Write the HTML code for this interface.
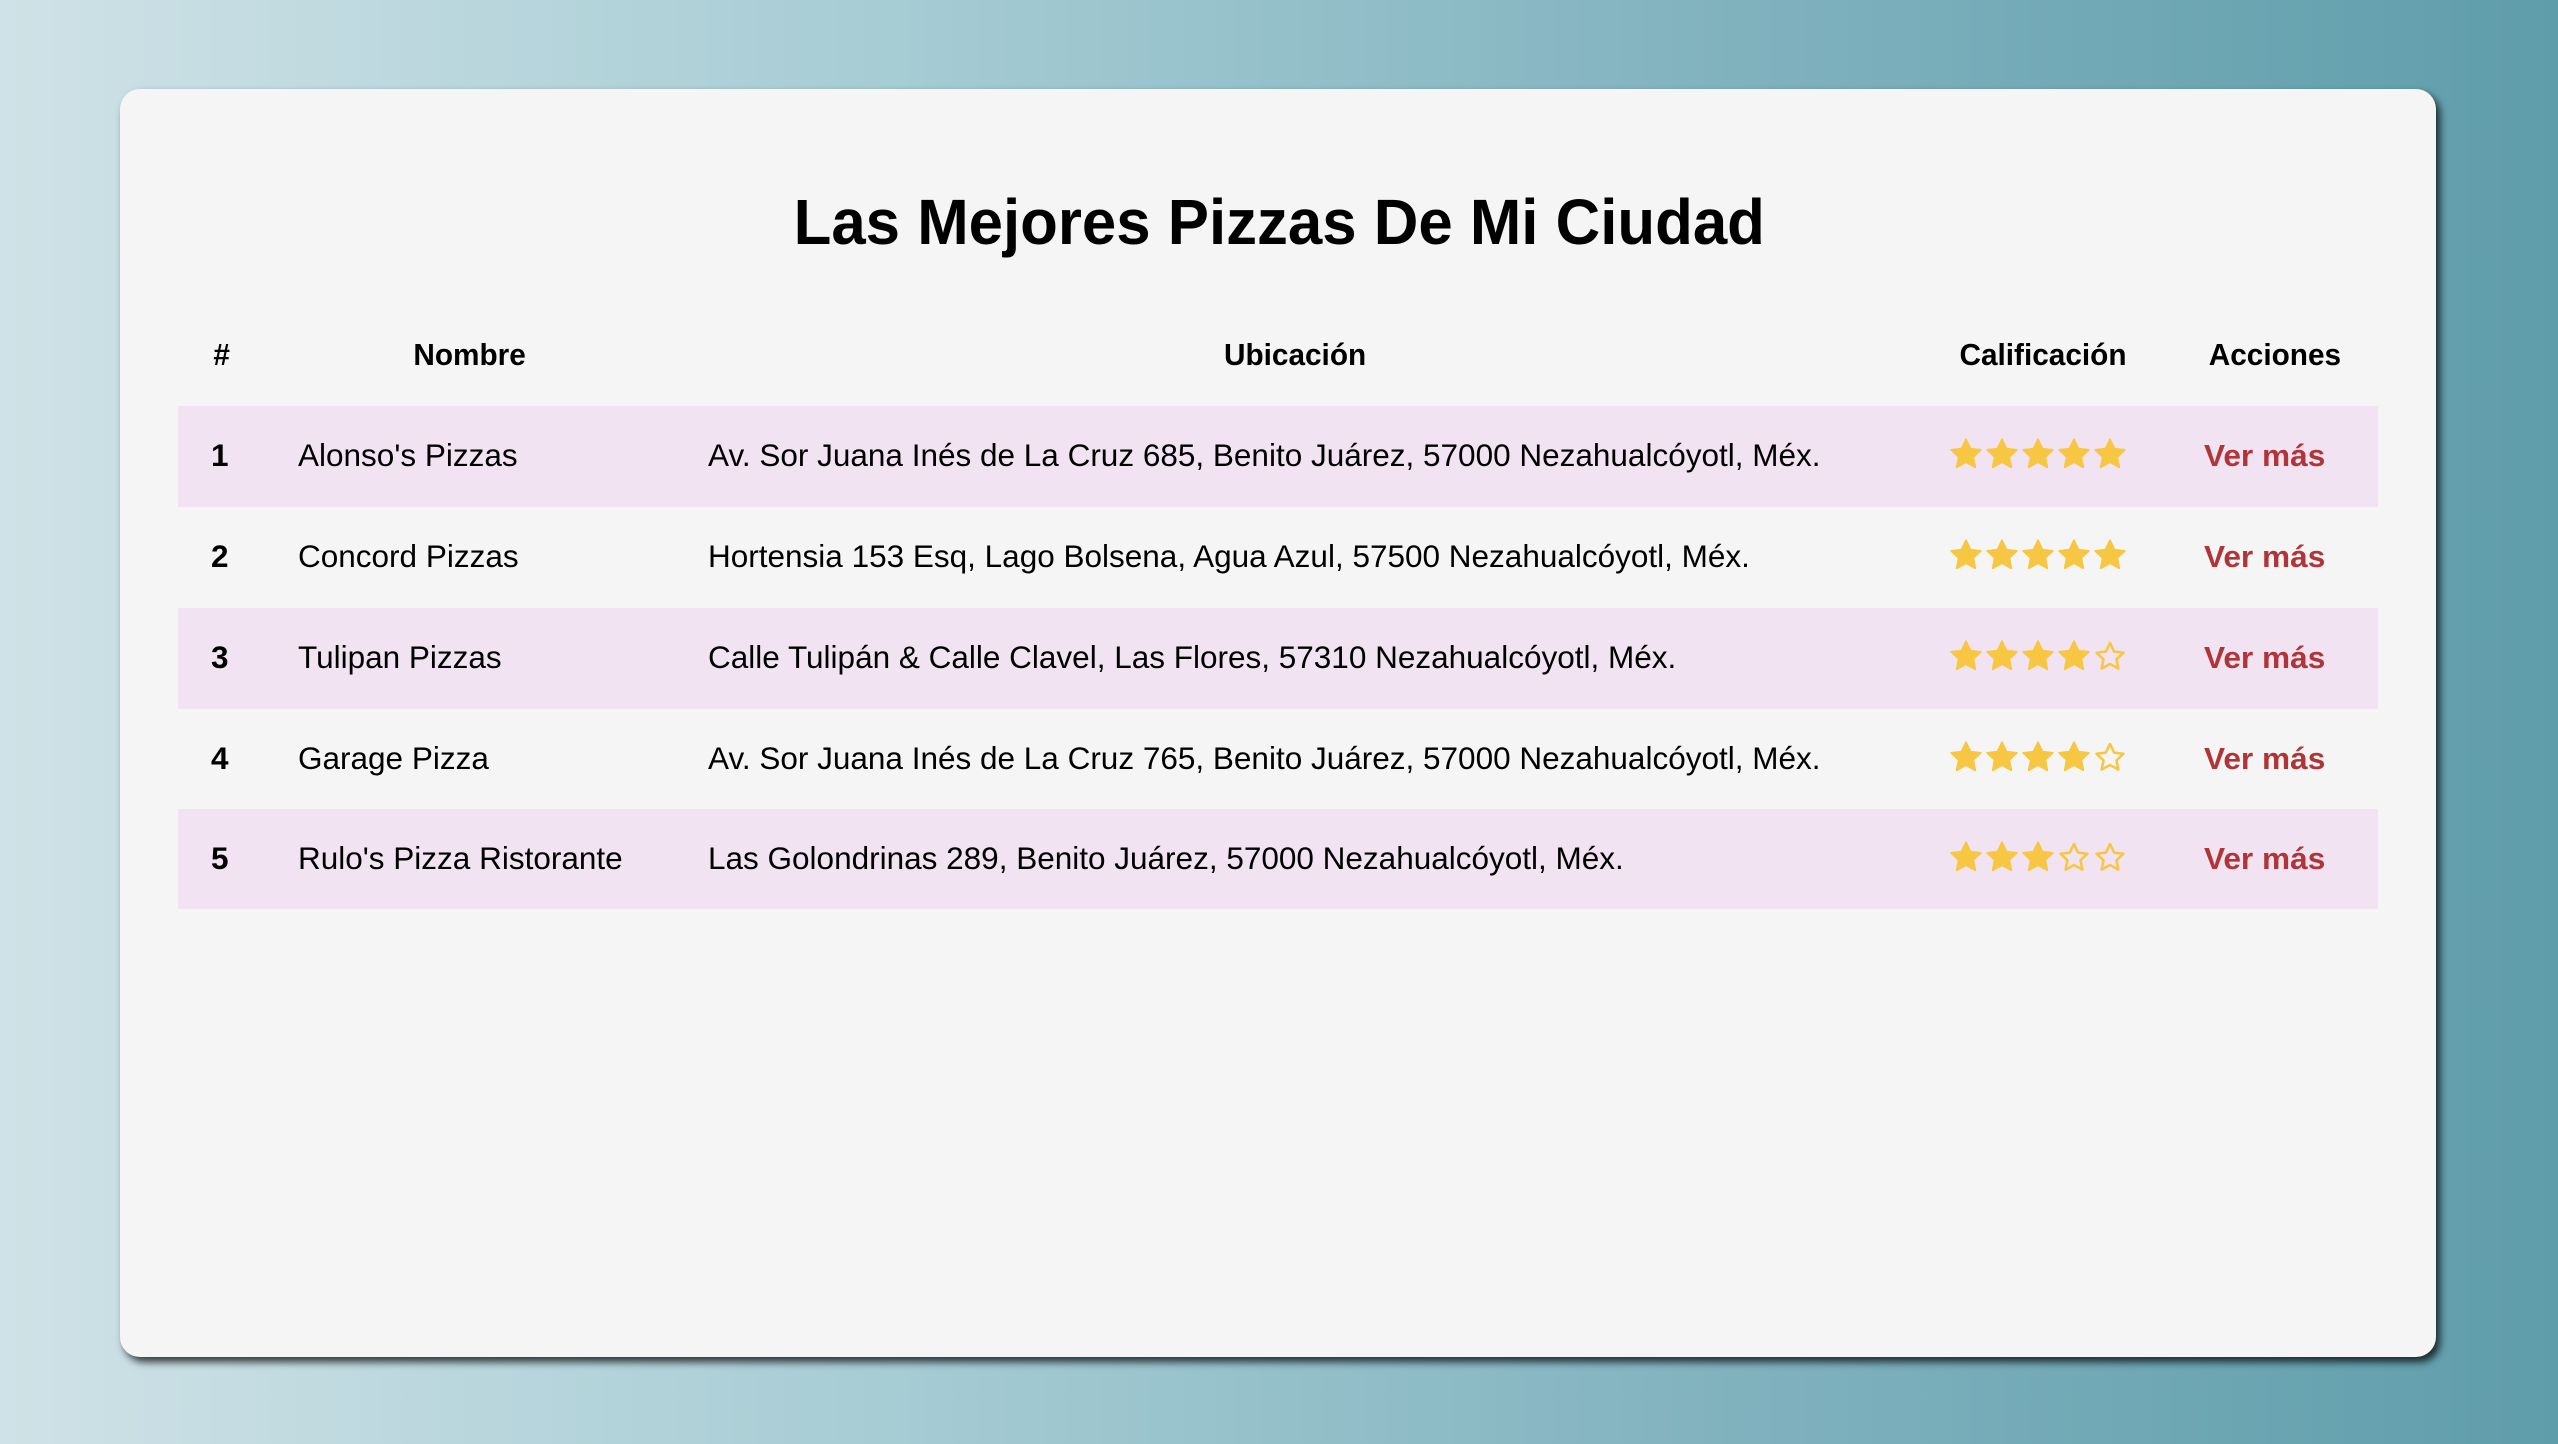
<!DOCTYPE html>
<html><head><meta charset="utf-8"><style>
html,body{margin:0;padding:0;width:2558px;height:1444px;overflow:hidden}
body{background:linear-gradient(90deg,#cfe2e7 0%,#a6ccd4 35%,#83b4c0 65%,#5f9dab 100%);font-family:"Liberation Sans",sans-serif;position:relative}
.card{position:absolute;left:120px;top:89px;width:2316px;height:1268px;background:#f5f5f5;border-radius:20px;box-shadow:4px 5px 8px rgba(0,0,0,.75)}
.t{position:absolute;white-space:nowrap;line-height:1;transform-origin:left center}
.title{position:absolute;left:0;width:2558px;top:189px;text-align:center;font-weight:bold;font-size:64px;line-height:66px;color:#000}
.title span{display:inline-block;transform:scaleX(.965)}
.h{font-weight:bold;font-size:31px;color:#000;top:339px}
.h span{display:inline-block;transform:scaleX(.96)}
.row{position:absolute;left:178px;width:2200px;height:101px}
.pink{background:#f1e3f1}
.c{font-size:31.5px;color:#000}
.n{font-weight:bold}
.v{color:#b03538;font-weight:bold;font-size:31px;transform:scaleX(1.02)}
.stars{position:absolute;left:1949px;display:flex;gap:2px}
</style></head><body>
<div class="card"></div>
<div class="title"><span>Las Mejores Pizzas De Mi Ciudad</span></div>
<div class="t h" style="left:172px;width:100px;text-align:center"><span>#</span></div>
<div class="t h" style="left:370px;width:200px;text-align:center"><span>Nombre</span></div>
<div class="t h" style="left:1195px;width:200px;text-align:center"><span>Ubicación</span></div>
<div class="t h" style="left:1943px;width:200px;text-align:center"><span>Calificación</span></div>
<div class="t h" style="left:2175px;width:200px;text-align:center"><span>Acciones</span></div>

<svg width="0" height="0" style="position:absolute"><defs>
<symbol id="sf" viewBox="0 0 24 24"><path d="M12 1.5l3.2 6.7 7.3.9-5.3 5 1.4 7.3L12 17.8l-6.6 3.6 1.4-7.3-5.3-5 7.3-.9z" fill="#f7c744" stroke="#f7c744" stroke-width="1.2" stroke-linejoin="round"/></symbol>
<symbol id="se" viewBox="0 0 24 24"><path d="M12 2.8l2.9 6.1 6.6.8-4.9 4.6 1.3 6.6L12 17.6l-5.9 3.3 1.3-6.6-4.9-4.6 6.6-.8z" fill="none" stroke="#f7c744" stroke-width="1.8" stroke-linejoin="round"/></symbol>
</defs></svg>

<div class="row pink" style="top:406px"></div>
<div class="row" style="top:507px"></div>
<div class="row pink" style="top:608px"></div>
<div class="row" style="top:709px"></div>
<div class="row pink" style="top:809px;height:100px"></div>

<div class="t c n" style="left:211px;top:440px">1</div>
<div class="t c" style="left:298px;top:440px">Alonso's Pizzas</div>
<div class="t c" style="left:708px;top:440px">Av. Sor Juana Inés de La Cruz 685, Benito Juárez, 57000 Nezahualcóyotl, Méx.</div>
<div class="stars" style="top:437px"><svg width="34" height="34"><use href="#sf"/></svg><svg width="34" height="34"><use href="#sf"/></svg><svg width="34" height="34"><use href="#sf"/></svg><svg width="34" height="34"><use href="#sf"/></svg><svg width="34" height="34"><use href="#sf"/></svg></div>
<div class="t v" style="left:2204px;top:440px">Ver más</div>

<div class="t c n" style="left:211px;top:541px">2</div>
<div class="t c" style="left:298px;top:541px">Concord Pizzas</div>
<div class="t c" style="left:708px;top:541px">Hortensia 153 Esq, Lago Bolsena, Agua Azul, 57500 Nezahualcóyotl, Méx.</div>
<div class="stars" style="top:538px"><svg width="34" height="34"><use href="#sf"/></svg><svg width="34" height="34"><use href="#sf"/></svg><svg width="34" height="34"><use href="#sf"/></svg><svg width="34" height="34"><use href="#sf"/></svg><svg width="34" height="34"><use href="#sf"/></svg></div>
<div class="t v" style="left:2204px;top:541px">Ver más</div>

<div class="t c n" style="left:211px;top:642px">3</div>
<div class="t c" style="left:298px;top:642px">Tulipan Pizzas</div>
<div class="t c" style="left:708px;top:642px">Calle Tulipán &amp; Calle Clavel, Las Flores, 57310 Nezahualcóyotl, Méx.</div>
<div class="stars" style="top:639px"><svg width="34" height="34"><use href="#sf"/></svg><svg width="34" height="34"><use href="#sf"/></svg><svg width="34" height="34"><use href="#sf"/></svg><svg width="34" height="34"><use href="#sf"/></svg><svg width="34" height="34"><use href="#se"/></svg></div>
<div class="t v" style="left:2204px;top:642px">Ver más</div>

<div class="t c n" style="left:211px;top:743px">4</div>
<div class="t c" style="left:298px;top:743px">Garage Pizza</div>
<div class="t c" style="left:708px;top:743px">Av. Sor Juana Inés de La Cruz 765, Benito Juárez, 57000 Nezahualcóyotl, Méx.</div>
<div class="stars" style="top:740px"><svg width="34" height="34"><use href="#sf"/></svg><svg width="34" height="34"><use href="#sf"/></svg><svg width="34" height="34"><use href="#sf"/></svg><svg width="34" height="34"><use href="#sf"/></svg><svg width="34" height="34"><use href="#se"/></svg></div>
<div class="t v" style="left:2204px;top:743px">Ver más</div>

<div class="t c n" style="left:211px;top:843px">5</div>
<div class="t c" style="left:298px;top:843px">Rulo's Pizza Ristorante</div>
<div class="t c" style="left:708px;top:843px">Las Golondrinas 289, Benito Juárez, 57000 Nezahualcóyotl, Méx.</div>
<div class="stars" style="top:840px"><svg width="34" height="34"><use href="#sf"/></svg><svg width="34" height="34"><use href="#sf"/></svg><svg width="34" height="34"><use href="#sf"/></svg><svg width="34" height="34"><use href="#se"/></svg><svg width="34" height="34"><use href="#se"/></svg></div>
<div class="t v" style="left:2204px;top:843px">Ver más</div>
</body></html>
